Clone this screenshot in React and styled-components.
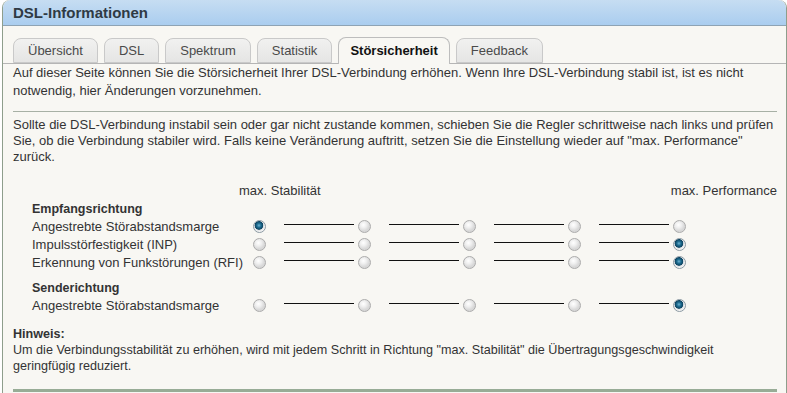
import React from 'react'
import styled, { createGlobalStyle } from 'styled-components'

const GlobalStyle = createGlobalStyle`
  html, body { margin: 0; padding: 0; background: #fff; }
  body { font-family: "Liberation Sans", Arial, sans-serif; color: #333; overflow: hidden; }
`;

const Panel = styled.div`
  margin-left: 2px;
  border-left: 1px solid #8e9e8c;
  border-right: 1px solid #8e9e8c;
  border-radius: 8px 8px 0 0;
  background: #f8f7f3;
  height: 393px;
`;

const TitleBar = styled.div`
  height: 25px;
  border-bottom: 1px solid #8ea3b4;
  border-radius: 8px 8px 0 0;
  background: linear-gradient(#c6ddf2, #aacdef);
  padding-left: 10px;
  font-size: 15px;
  font-weight: bold;
  line-height: 26px;
  color: #2f3a44;
`;

const TabBar = styled.div`
  display: flex;
  align-items: flex-end;
  gap: 6px;
  margin-top: 11px;
  padding-left: 10px;
  height: 26px;
  border-bottom: 1px solid #b5b5b5;
`;

const Tab = styled.div`
  height: ${p => (p.$active ? '27px' : '25px')};
  margin-bottom: ${p => (p.$active ? '-1px' : '0')};
  box-sizing: border-box;
  padding: 0 ${p => (p.$active ? '11px' : '14px')};
  border: 1px solid ${p => (p.$active ? '#bdbdbd' : '#c9c9c9')};
  border-bottom: ${p => (p.$active ? 'none' : '1px solid #c9c9c9')};
  border-radius: 8px 8px 0 0;
  background: ${p => (p.$active ? '#f8f7f3' : 'linear-gradient(#f1f1f0, #e5e5e4)')};
  font-size: 13px;
  font-weight: ${p => (p.$active ? 'bold' : 'normal')};
  color: ${p => (p.$active ? '#111' : '#4a4a4a')};
  line-height: ${p => (p.$active ? '26px' : '23px')};
`;

const Content = styled.div`
  padding: 0 9px 0 10px;
  font-size: 13px;
`;

const Para = styled.p`
  margin: 0;
  line-height: ${p => p.$lh || 16}px;
`;

const Divider = styled.div`
  height: 1px;
  background: #a7b0a5;
  margin: 11px 0 5px;
`;

const ScaleHead = styled.div`
  display: flex;
  justify-content: space-between;
  margin-top: 18px;
  padding-left: 226px;
  line-height: 16px;
`;

const Section = styled.div`
  padding-left: 19px;
  margin-top: ${p => p.$mt || 0}px;
`;

const SectionTitle = styled.div`
  font-size: 12.5px;
  font-weight: bold;
  line-height: 16px;
`;

const Row = styled.div`
  display: flex;
  align-items: center;
  height: 18px;
`;

const Label = styled.div`
  width: 221px;
  flex: none;
  white-space: nowrap;
`;

const Radio = styled.span`
  width: 13px;
  height: 13px;
  flex: none;
  box-sizing: border-box;
  border-radius: 50%;
  border: 1px solid ${p => (p.$on ? '#8c9aa3' : '#acacac')};
  background: ${p =>
    p.$on
      ? 'radial-gradient(circle at 45% 40%, #6fb3d2 0, #1f6e92 2px, #0d4461 4px, #d9dee2 4.6px, #f4f4f4 6px)'
      : 'radial-gradient(circle at 40% 35%, #ffffff 0, #efefef 3px, #d8d8d8 6px)'};
`;

const Segment = styled.span`
  width: 92px;
  flex: none;
  display: flex;
  &::before {
    content: '';
    display: block;
    width: 70px;
    height: 1px;
    margin: 0 4px 3px 18px;
    background: #111;
  }
`;

const Note = styled.div`
  margin-top: 12px;
  font-size: 12.6px;
  line-height: 16px;
`;

const NoteTitle = styled.div`
  font-weight: bold;
`;

const Rule = styled.div`
  height: 3px;
  background: #98ac96;
  margin-top: 15px;
`;

const tabs = ['Übersicht', 'DSL', 'Spektrum', 'Statistik', 'Störsicherheit', 'Feedback']

const SliderRow = ({ label, pos }) => (
  <Row>
    <Label>{label}</Label>
    {[0, 1, 2, 3, 4].map(i => (
      <React.Fragment key={i}>
        {i > 0 && <Segment />}
        <Radio $on={i === pos} />
      </React.Fragment>
    ))}
  </Row>
)

const App = () => {
  return (
    <>
      <GlobalStyle />
      <Panel>
        <TitleBar>DSL-Informationen</TitleBar>
        <TabBar>
          {tabs.map(t => (
            <Tab key={t} $active={t === 'Störsicherheit'}>{t}</Tab>
          ))}
        </TabBar>
        <Content>
          <Para $lh={18}>
            Auf dieser Seite können Sie die Störsicherheit Ihrer DSL-Verbindung erhöhen. Wenn Ihre DSL-Verbindung stabil ist, ist es nicht notwendig, hier Änderungen vorzunehmen.
          </Para>
          <Divider />
          <Para>
            Sollte die DSL-Verbindung instabil sein oder gar nicht zustande kommen, schieben Sie die Regler schrittweise nach links und prüfen Sie, ob die Verbindung stabiler wird. Falls keine Veränderung auftritt, setzen Sie die Einstellung wieder auf "max. Performance" zurück.
          </Para>
          <ScaleHead>
            <span>max. Stabilität</span>
            <span>max. Performance</span>
          </ScaleHead>
          <Section $mt={2}>
            <SectionTitle>Empfangsrichtung</SectionTitle>
            <SliderRow label="Angestrebte Störabstandsmarge" pos={0} />
            <SliderRow label="Impulsstörfestigkeit (INP)" pos={4} />
            <SliderRow label="Erkennung von Funkstörungen (RFI)" pos={4} />
          </Section>
          <Section $mt={9}>
            <SectionTitle>Senderichtung</SectionTitle>
            <SliderRow label="Angestrebte Störabstandsmarge" pos={4} />
          </Section>
          <Note>
            <NoteTitle>Hinweis:</NoteTitle>
            Um die Verbindungsstabilität zu erhöhen, wird mit jedem Schritt in Richtung "max. Stabilität" die Übertragungsgeschwindigkeit geringfügig reduziert.
          </Note>
          <Rule />
        </Content>
      </Panel>
    </>
  )
}

export default App
